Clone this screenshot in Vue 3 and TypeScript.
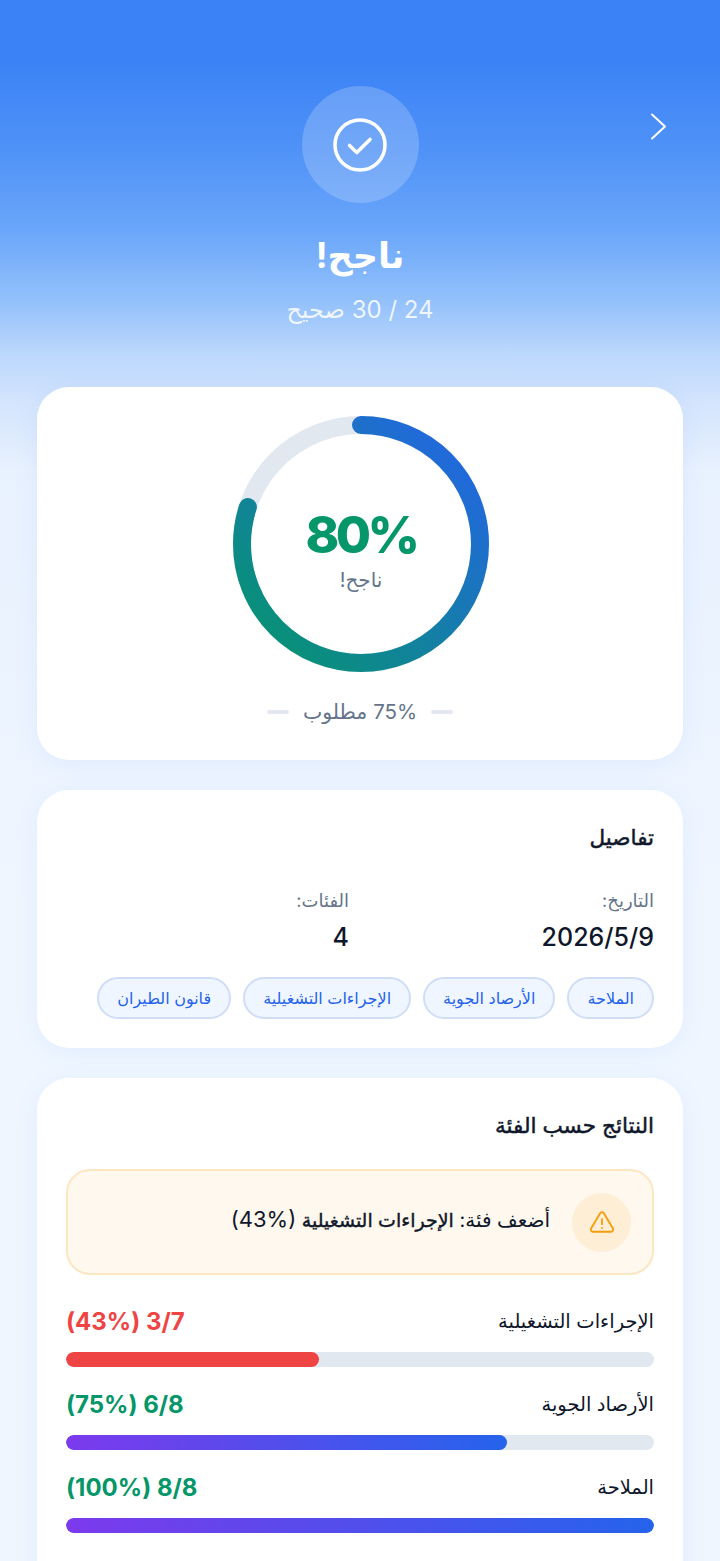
<template>
  <div class="page" dir="rtl">
    <header class="hero">
      <button class="back" aria-label="back">
        <svg width="17" height="27" viewBox="0 0 17 27" fill="none">
          <path d="M2 1.5 L15 13.5 L2 25.5" stroke="#fff" stroke-width="2" stroke-linecap="round" stroke-linejoin="round" />
        </svg>
      </button>
      <div class="hero-icon">
        <svg width="56" height="56" viewBox="0 0 56 56" fill="none">
          <circle cx="28" cy="28" r="25" stroke="#fff" stroke-width="3.6" />
          <path d="M17.5 28.5 L24.8 35.5 L38 22.5" stroke="#fff" stroke-width="3.6" stroke-linecap="round" stroke-linejoin="round" />
        </svg>
      </div>
      <h1 class="hero-title">ناجح!</h1>
      <p class="hero-sub">24 / 30 صحيح</p>
    </header>

    <section class="card score-card">
      <div class="ring">
        <svg width="256" height="256" viewBox="0 0 256 256">
          <defs>
            <linearGradient id="ringGrad" x1="0" y1="0" x2="1" y2="1" gradientUnits="objectBoundingBox">
              <stop offset="0" stop-color="#059669" />
              <stop offset="1" stop-color="#2563eb" />
            </linearGradient>
          </defs>
          <circle cx="128" cy="128" r="119" fill="none" stroke="#e2e8f0" stroke-width="18" />
          <circle
            class="ring-value"
            cx="128"
            cy="128"
            r="119"
            fill="none"
            stroke="url(#ringGrad)"
            stroke-width="18"
            stroke-linecap="round"
            :stroke-dasharray="ringDash"
          />
        </svg>
        <div class="ring-center">
          <div class="ring-pct">80%</div>
          <div class="ring-label">ناجح!</div>
        </div>
      </div>
      <div class="required">
        <span class="dash"></span>
        <span>75% مطلوب</span>
        <span class="dash"></span>
      </div>
    </section>

    <section class="card details-card">
      <h2 class="card-title">تفاصيل</h2>
      <div class="meta">
        <div>
          <div class="meta-label">التاريخ:</div>
          <div class="meta-value">2026/5/9</div>
        </div>
        <div>
          <div class="meta-label">الفئات:</div>
          <div class="meta-value">4</div>
        </div>
      </div>
      <div class="chips">
        <span v-for="c in chips" :key="c" class="chip">{{ c }}</span>
      </div>
    </section>

    <section class="card results-card">
      <h2 class="card-title">النتائج حسب الفئة</h2>
      <div class="alert">
        <div class="alert-icon">
          <svg width="26" height="26" viewBox="0 0 24 24" fill="none" stroke="#f59e0b" stroke-width="1.7" stroke-linecap="round" stroke-linejoin="round">
            <path d="M10.3 3.9 L1.9 18 a2 2 0 0 0 1.7 3 h16.8 a2 2 0 0 0 1.7-3 L13.7 3.9 a2 2 0 0 0-3.4 0 z" />
            <path d="M12 9.5 v4.5" />
            <path d="M12 17.5 h.01" />
          </svg>
        </div>
        <p class="alert-text">أضعف فئة: <b>الإجراءات التشغيلية</b> <span class="alert-pct">(%43)</span></p>
      </div>
      <div class="rows">
        <div v-for="r in results" :key="r.name" class="row">
          <div class="row-head">
            <span class="row-name">{{ r.name }}</span>
            <span class="row-score" :class="{ low: r.pct < 50 }">{{ r.right }}/{{ r.total }} ({{ r.pct }}%)</span>
          </div>
          <div class="track" dir="ltr">
            <div class="fill" :class="{ low: r.pct < 50 }" :style="{ width: r.pct + '%' }"></div>
          </div>
        </div>
      </div>
    </section>
  </div>
</template>

<script setup lang="ts">
import { computed } from 'vue'

interface CategoryResult {
  name: string
  right: number
  total: number
  pct: number
}

const chips = ['الملاحة', 'الأرصاد الجوية', 'الإجراءات التشغيلية', 'قانون الطيران']

const results: CategoryResult[] = [
  { name: 'الإجراءات التشغيلية', right: 3, total: 7, pct: 43 },
  { name: 'الأرصاد الجوية', right: 6, total: 8, pct: 75 },
  { name: 'الملاحة', right: 8, total: 8, pct: 100 }
]

const ringDash = computed(() => {
  const c = 2 * Math.PI * 119
  return `${c * 0.8} ${c}`
})
</script>

<style>
html,
body {
  margin: 0;
  overflow: hidden;
}
</style>

<style scoped>
.page {
  height: 1561px;
  overflow: hidden;
  padding: 0 37px;
  box-sizing: border-box;
  display: flex;
  flex-direction: column;
  gap: 30px;
  background: linear-gradient(180deg, #3b82f6 0, #3b82f6 60px, #4f92f7 150px, #6aa6fa 230px, #92c0fb 300px, #b9d6fc 350px, #d3e4fd 400px, #e8f1fe 470px, #eff6ff 900px);
  font-family: Inter, 'Liberation Sans', 'Noto Sans', 'DejaVu Sans', sans-serif;
  color: #0f172a;
}

.hero {
  position: relative;
  height: 357px;
  flex: none;
  padding-top: 86px;
  box-sizing: border-box;
  display: flex;
  flex-direction: column;
  align-items: center;
}

.back {
  position: absolute;
  top: 113px;
  right: 16px;
  padding: 0;
  border: 0;
  background: none;
  line-height: 0;
}

.hero-icon {
  width: 117px;
  height: 117px;
  border-radius: 50%;
  background: rgba(255, 255, 255, 0.2);
  display: flex;
  align-items: center;
  justify-content: center;
}

.hero-title {
  margin: 26px 0 0;
  font-size: 35px;
  line-height: 52px;
  font-weight: 700;
  color: #fff;
}

.hero-sub {
  margin: 12px 0 0;
  font-size: 24px;
  line-height: 34px;
  color: rgba(255, 255, 255, 0.85);
}

.card {
  background: #fff;
  border-radius: 32px;
  box-shadow: 0 4px 24px rgba(59, 130, 246, 0.08);
  padding: 29px;
  flex: none;
}

.score-card {
  height: 373px;
  box-sizing: border-box;
  display: flex;
  flex-direction: column;
  align-items: center;
}

.ring {
  position: relative;
  width: 256px;
  height: 256px;
  margin-left: 2px;
}

.ring svg {
  display: block;
}

.ring-value {
  transform: rotate(-90deg);
  transform-origin: 128px 128px;
}

.ring-center {
  position: absolute;
  inset: 0;
  padding-top: 8px;
  box-sizing: border-box;
  display: flex;
  flex-direction: column;
  align-items: center;
  justify-content: center;
}

.ring-pct {
  font-size: 51px;
  line-height: 64px;
  font-weight: 800;
  letter-spacing: -3.5px;
  color: #059669;
}

.ring-label {
  font-size: 20px;
  line-height: 26px;
  color: #64748b;
}

.required {
  margin-top: 24px;
  display: flex;
  align-items: center;
  gap: 14px;
  font-size: 20.5px;
  line-height: 32px;
  color: #64748b;
}

.dash {
  width: 22px;
  height: 4px;
  background: #e2e8f0;
  border-radius: 2px;
}

.details-card {
  height: 258px;
  box-sizing: border-box;
}

.results-card {
  padding-bottom: 80px;
}

.card-title {
  margin: 0;
  font-size: 21.5px;
  line-height: 36px;
  font-weight: 400;
  -webkit-text-stroke: 0.5px #0f172a;
}

.meta {
  margin-top: 33px;
  display: grid;
  grid-template-columns: 1fr 1fr;
  gap: 0 22px;
}

.meta-label {
  font-size: 18px;
  line-height: 26px;
  color: #64748b;
}

.meta-value {
  margin-top: 5px;
  font-size: 25px;
  line-height: 36px;
  font-weight: 500;
}

.chips {
  margin-top: 22px;
  display: flex;
  flex-wrap: wrap;
  gap: 12px;
}

.chip {
  padding: 0 18px;
  height: 42px;
  line-height: 39px;
  box-sizing: border-box;
  border: 2px solid #d0ddf7;
  border-radius: 21px;
  background: #eff6ff;
  color: #2563eb;
  font-size: 16px;
}

.alert {
  margin-top: 26px;
  height: 106px;
  box-sizing: border-box;
  padding: 0 21px 0 0;
  display: flex;
  align-items: center;
  gap: 22px;
  background: #fef8ee;
  border: 2px solid #fde6c2;
  border-radius: 24px;
}

.alert-icon {
  width: 59px;
  height: 59px;
  flex: none;
  border-radius: 50%;
  background: #feeed6;
  display: flex;
  align-items: center;
  justify-content: center;
}

.alert-text {
  margin: -4px 0 0;
  font-size: 20px;
  line-height: 30px;
}

.alert-text b {
  font-size: 19px;
  font-weight: 400;
  -webkit-text-stroke: 0.4px #0f172a;
}

.alert-pct {
  font-size: 22px;
}

.rows {
  margin-top: 28px;
  display: flex;
  flex-direction: column;
  gap: 19px;
}

.row-head {
  display: flex;
  justify-content: space-between;
  align-items: center;
  height: 36px;
}

.row-name {
  font-size: 19.5px;
}

.row-score {
  font-size: 24px;
  font-weight: 700;
  color: #059669;
}

.row-score.low {
  color: #ef4444;
}

.track {
  margin-top: 13px;
  height: 15px;
  border-radius: 8px;
  background: #e2e8f0;
  overflow: hidden;
}

.fill {
  height: 100%;
  border-radius: 8px;
  background: linear-gradient(90deg, #7c3aed, #2563eb);
}

.fill.low {
  background: #ef4444;
}
</style>
